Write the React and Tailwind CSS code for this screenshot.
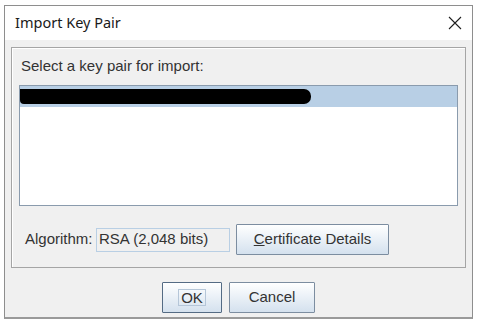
export default function App() {
  const font = { fontFamily: '"Liberation Sans", Arial, sans-serif' };
  return (
    <div className="w-[478px] h-[327px] bg-white pt-[5px] pl-[4px]">
      <div className="w-[469px] h-[314px] border border-[#8e8e8e] border-b-2 border-b-[#9a9a9a] flex flex-col">
        <div className="h-[34px] bg-white flex items-center justify-between pl-[10px] pr-[9px]">
          <span className="text-[14.5px] text-[#1a1a1a]" style={{ fontFamily: '"Noto Sans", "Open Sans", sans-serif' }}>Import Key Pair</span>
          <svg width="14" height="14" viewBox="0 0 14 14" className="mr-[1px]">
            <path d="M1 1 L13 13 M13 1 L1 13" stroke="#1f1f1f" strokeWidth="1.1" />
          </svg>
        </div>
        <div className="flex-1 bg-[#f0f0f0] flex flex-col px-[6px] pt-[7px]" style={font}>
          <div className="h-[221px] border border-[#a5a5a5] shadow-[inset_1px_1px_0_#ffffff] flex flex-col">
            <div className="h-[37px] flex items-center pl-[9px] text-[15px] text-[#333]">Select a key pair for import:</div>
            <div className="ml-[7px] w-[439px] h-[121px] border border-[#8a9bad] bg-white">
              <div className="h-[21px] bg-[#b8cfe5] flex items-center">
                <div className="w-[291px] h-[15px] bg-black rounded-r-[7px] rounded-bl-[4px]"></div>
              </div>
            </div>
            <div className="flex items-center mt-[18px] pl-[13px]">
              <span className="text-[15px] text-[#333] w-[71px]">Algorithm:</span>
              <div className="w-[134px] h-[24px] border border-[#b9cfe4] flex items-center pl-[2px] text-[15px] text-[#333]">RSA (2,048 bits)</div>
              <button className="ml-[6px] w-[153px] h-[31px] border border-[#7c8da0] rounded-[1px] bg-gradient-to-b from-[#ffffff] to-[#d4e1ee] text-[15px] text-[#333] flex items-center justify-center">
                <span><span className="underline">C</span>ertificate Details</span>
              </button>
            </div>
          </div>
          <div className="flex justify-center gap-[7px] mt-[14px]">
            <button className="w-[60px] h-[31px] border border-[#546b84] rounded-[1px] bg-gradient-to-b from-[#ffffff] to-[#d4e1ee] text-[15px] text-[#333] flex items-center justify-center">
              <span className="border border-[#b5c6d8] px-[2px] leading-[15px]">OK</span>
            </button>
            <button className="w-[86px] h-[31px] border border-[#7c8da0] rounded-[1px] bg-gradient-to-b from-[#ffffff] to-[#d4e1ee] text-[15px] text-[#333] flex items-center justify-center">
              Cancel
            </button>
          </div>
        </div>
      </div>
    </div>
  );
}
